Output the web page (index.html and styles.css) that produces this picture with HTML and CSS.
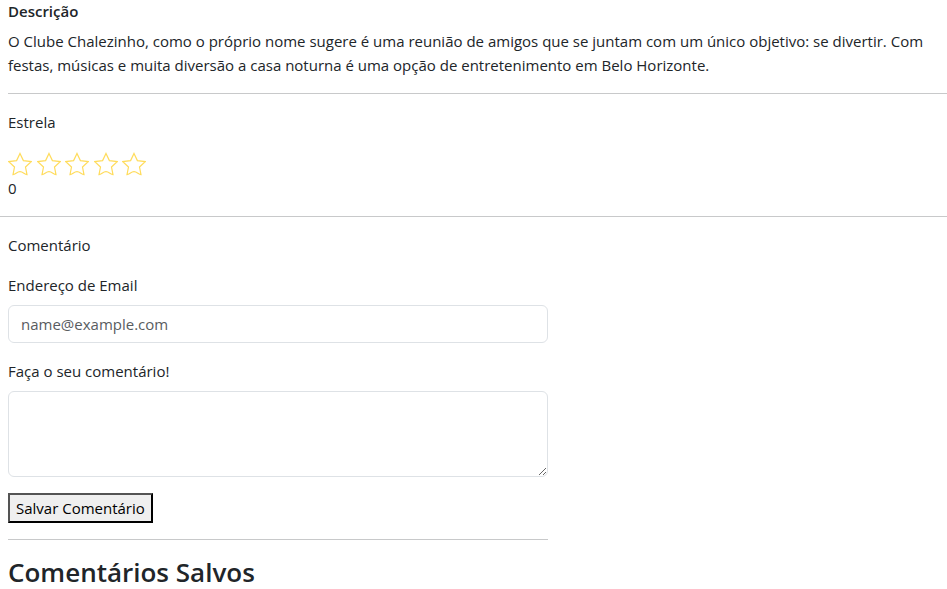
FILE: index.html
```html
<!DOCTYPE html>
<html lang="pt-BR">
<head>
<meta charset="utf-8">
<meta name="viewport" content="width=device-width, initial-scale=1">
<title>Clube Chalezinho</title>
<link rel="stylesheet" href="styles.css">
</head>
<body>
<svg class="sprite" aria-hidden="true">
  <symbol id="star" viewBox="0 0 24 24">
    <path d="M12 1.5 15.4 8.6 23.2 9.6 17.5 15 19 22.6C16.500 22.400 15 19.600 12 19.600S7.500 22.400 5 22.600L6.500 15 .8 9.600 8.600 8.600Z"/>
  </symbol>
</svg>
<main>
  <section class="description">
    <h1 class="title">Descrição</h1>
    <p>O Clube Chalezinho, como o próprio nome sugere é uma reunião de amigos que se juntam com um único objetivo: se divertir. Com festas, músicas e muita diversão a casa noturna é uma opção de entretenimento em Belo Horizonte.</p>
  </section>
  <section class="rating">
    <p>Estrela</p>
    <div class="stars">
      <button class="star" type="button" aria-label="1 estrela"><svg><use href="#star"/></svg></button>
      <button class="star" type="button" aria-label="2 estrelas"><svg><use href="#star"/></svg></button>
      <button class="star" type="button" aria-label="3 estrelas"><svg><use href="#star"/></svg></button>
      <button class="star" type="button" aria-label="4 estrelas"><svg><use href="#star"/></svg></button>
      <button class="star" type="button" aria-label="5 estrelas"><svg><use href="#star"/></svg></button>
    </div>
    <output>0</output>
  </section>
  <section class="comments">
    <form class="form">
      <p>Comentário</p>
      <div class="field">
        <label for="email">Endereço de Email</label>
        <input class="control" id="email" type="email" placeholder="name@example.com">
      </div>
      <div class="field">
        <label for="comment">Faça o seu comentário!</label>
        <textarea class="control" id="comment" rows="3"></textarea>
      </div>
      <button class="save" type="button">Salvar Comentário</button>
    </form>
    <h2 class="saved">Comentários Salvos</h2>
  </section>
</main>
</body>
</html>
```

FILE: styles.css
```css
* {
  box-sizing: border-box;
}

body {
  margin: 0;
  background: #fff;
  color: #212529;
  font: 400 15px/24px "Segoe UI", "Open Sans", sans-serif;
}

p, h1, h2 {
  margin: 0;
}

.sprite {
  display: none;
}

.description {
  display: flex;
  flex-direction: column;
  gap: 6px;
  margin-left: 8px;
  padding-bottom: 16px;
  border-bottom: 1px solid #c8c9ca;
}

.title {
  font-size: 15px;
  font-weight: 600;
  line-height: 23px;
}

.rating {
  padding: 16px 8px;
  border-bottom: 1px solid #c8c9ca;
}

.stars {
  display: flex;
  justify-content: space-between;
  width: 138px;
  margin-top: 18px;
}

.star {
  width: 24px;
  height: 24px;
  padding: 0;
  border: 0;
  background: none;
  cursor: pointer;
}

.star svg {
  display: block;
  width: 24px;
  height: 24px;
  fill: none;
  stroke: #ffdc5c;
  stroke-width: 1.2;
}

.rating output {
  display: block;
}

.comments {
  max-width: 556px;
  padding: 16px 8px 0;
}

.form {
  display: flex;
  flex-direction: column;
  align-items: flex-start;
  gap: 16px;
  padding-bottom: 16px;
  border-bottom: 1px solid #c8c9ca;
}

.field {
  display: flex;
  flex-direction: column;
  gap: 8px;
  width: 100%;
}

.control {
  display: block;
  width: 100%;
  padding: 6px 12px;
  border: 1px solid #dee2e6;
  border-radius: 6px;
  background: #fff;
  color: inherit;
  font: inherit;
}

.control::placeholder {
  color: #595c5f;
  opacity: 1;
}

textarea.control {
  resize: vertical;
}

.save {
  padding: 1px 6px;
  border: 2px outset #000;
  background: #efefef;
  color: #000;
  font: inherit;
  line-height: 24px;
}

.saved {
  margin-top: 16px;
  font-size: 26px;
  font-weight: 600;
  line-height: 33px;
}
```
